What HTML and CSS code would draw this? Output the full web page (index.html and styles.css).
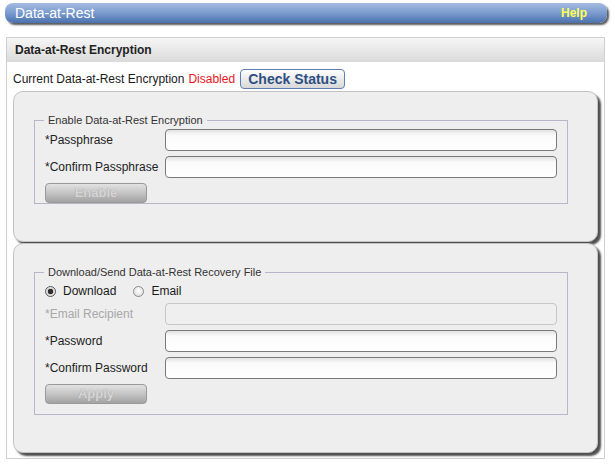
FILE: index.html
```html
<!DOCTYPE html>
<html>
<head>
<meta charset="utf-8">
<link rel="stylesheet" href="styles.css">
</head>
<body>
<div class="titlebar">
  <span class="title">Data-at-Rest</span>
  <a class="help">Help</a>
</div>
<div class="panel">
  <div class="panel-head">Data-at-Rest Encryption</div>
  <div class="panel-body">
    <div class="status-row">
      <span>Current Data-at-Rest Encryption</span>
      <span class="state-off">Disabled</span>
      <button class="btn-check">Check Status</button>
    </div>
    <div class="card">
      <fieldset class="group">
        <legend>Enable Data-at-Rest Encryption</legend>
        <div class="form form-first">
          <div class="row"><label>*Passphrase</label><input class="field" type="password"></div>
          <div class="row"><label>*Confirm Passphrase</label><input class="field" type="password"></div>
          <button class="btn-off">Enable</button>
        </div>
      </fieldset>
    </div>
    <div class="card card-second">
      <fieldset class="group group-pad">
        <legend>Download/Send Data-at-Rest Recovery File</legend>
        <div class="form">
          <div class="radio-row">
            <span class="radio radio-on"></span><span class="radio-text">Download</span>
            <span class="radio"></span><span class="radio-text">Email</span>
          </div>
          <div class="row row-muted"><label>*Email Recipient</label><input class="field field-off" disabled></div>
          <div class="row"><label>*Password</label><input class="field" type="password"></div>
          <div class="row"><label>*Confirm Password</label><input class="field" type="password"></div>
          <button class="btn-off">Apply</button>
        </div>
      </fieldset>
    </div>
  </div>
</div>
</body>
</html>
```
FILE: styles.css
```css
* { box-sizing: border-box; }
body {
  margin: 0;
  font-family: "Liberation Sans", Arial, sans-serif;
  font-size: 12px;
  color: #1a1a1a;
  background: #fff;
}
.titlebar {
  margin: 3px 8px 0 5px;
  height: 20px;
  border-radius: 8px;
  background: linear-gradient(#a3bbe0 0%, #7e9fd1 45%, #4b71ae 100%);
  box-shadow: 2px 2px 2px #5a5a5a;
  display: flex;
  align-items: center;
  justify-content: space-between;
  padding: 0 20px 0 10px;
}
.title {
  color: #fff;
  font-size: 14px;
}
.help {
  color: #ffff55;
  font-size: 12px;
  font-weight: bold;
}
.panel {
  margin: 14px 10px 0 6px;
  border: 1px solid #cfcfcf;
}
.panel-head {
  height: 24px;
  line-height: 24px;
  padding-left: 8px;
  font-weight: bold;
  color: #222;
  background: linear-gradient(#f6f6f6, #dadada);
}
.panel-body {
  padding: 7px 6px 5px 6px;
}
.status-row {
  height: 20px;
  display: flex;
  align-items: center;
}
.state-off {
  color: #e8141e;
  margin-left: 4px;
}
.btn-check {
  margin-left: 5px;
  width: 105px;
  height: 20px;
  padding: 0;
  border: 1px solid #5f7fb0;
  border-radius: 4px;
  background: linear-gradient(#fefefe, #d8d8d8);
  color: #2f4f82;
  font-family: "Liberation Sans", Arial, sans-serif;
  font-size: 14px;
  line-height: 18px;
  font-weight: bold;
}
.card {
  margin-top: 2px;
  background: #eeeeee;
  border: 1px solid #c2c2c2;
  border-radius: 10px;
  box-shadow: 3px 3px 2px #505050;
  padding: 21px 0 37px 20px;
}
.card-second {
  margin-top: 1px;
}
.group {
  width: 534px;
  margin: 0;
  padding: 0 10px 0 10px;
  border: 1px solid #b7b7c9;
  min-width: 0;
}
.group-pad {
  padding-bottom: 10px;
}
.group legend {
  font-size: 11px;
  line-height: 14px;
  padding: 0 4px;
  margin-left: -1px;
  color: #333;
}
.form {
  display: flex;
  flex-direction: column;
  gap: 5px;
  padding-top: 2px;
}
.row {
  display: flex;
  align-items: center;
  height: 22px;
}
.row label {
  width: 120px;
  color: #222;
}
.row-muted label {
  color: #a8a8a8;
}
.field {
  width: 392px;
  height: 22px;
  border: 1px solid #7a7a7a;
  border-radius: 4px;
  background: linear-gradient(#e2e2e2 0px, #fafafa 5px, #ffffff 100%);
  padding: 0 4px;
  margin: 0;
}
.field-off {
  border-color: #c6c6c6;
  background: #efefef;
}
.radio-row {
  display: flex;
  align-items: center;
  height: 20px;
  margin-top: 0;
  margin-bottom: -3px;
  font-size: 12px;
}
.radio {
  width: 11px;
  height: 11px;
  border-radius: 50%;
  border: 1px solid #8a8a8a;
  background: radial-gradient(circle at 50% 40%, #ffffff 0%, #d8d8d8 100%);
}
.radio-on {
  border-color: #555;
  background: radial-gradient(circle, #2e2e2e 0 2.5px, #d0d0d0 3px, #f2f2f2 5px);
}
.radio-text {
  margin-left: 7px;
  margin-right: 17px;
}
.btn-off {
  width: 102px;
  height: 20px;
  padding: 0;
  border: 1px solid #999;
  border-radius: 4px;
  background: linear-gradient(#e2e2e2, #c4c4c4 50%, #a2a2a2);
  color: #d6d6d6;
  text-shadow: 0 0 1px #9a9a9a;
  font-family: "Liberation Sans", Arial, sans-serif;
  font-size: 13px;
  line-height: 18px;
  font-weight: bold;
}
```
